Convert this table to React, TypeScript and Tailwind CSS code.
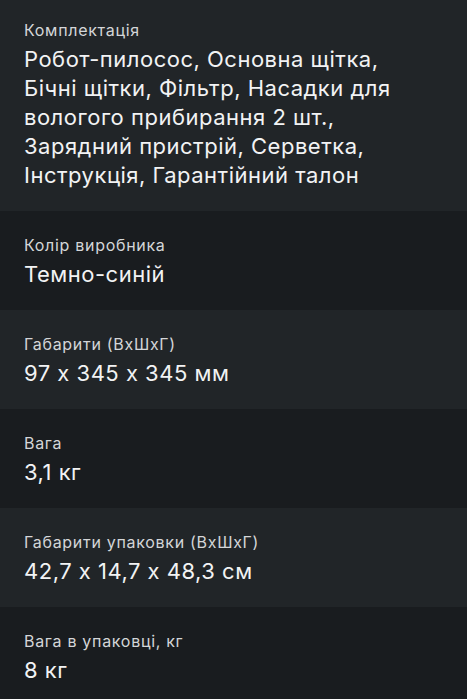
import React from 'react';

interface Spec {
  label: string;
  value: string;
}

const specs: Spec[] = [
  {
    label: 'Комплектація',
    value:
      'Робот-пилосос, Основна щітка, Бічні щітки, Фільтр, Насадки для вологого прибирання 2 шт., Зарядний пристрій, Серветка, Інструкція, Гарантійний талон',
  },
  { label: 'Колір виробника', value: 'Темно-синій' },
  { label: 'Габарити (ВхШхГ)', value: '97 x 345 x 345 мм' },
  { label: 'Вага', value: '3,1 кг' },
  { label: 'Габарити упаковки (ВхШхГ)', value: '42,7 x 14,7 x 48,3 см' },
  { label: 'Вага в упаковці, кг', value: '8 кг' },
];

export default function App() {
  return (
    <div
      className="w-[467px] h-[699px] overflow-hidden bg-[#191c1f]"
      style={{ fontFamily: 'Inter, "Noto Sans", sans-serif', fontFeatureSettings: '"calt" 0' }}
    >
      {specs.map((s, i) => (
        <div
          key={s.label}
          className={`pl-6 pr-[40px] pb-[21px] ${i === 0 ? 'pt-5' : 'pt-6'} ${
            i % 2 === 0 ? 'bg-[#212528]' : 'bg-[#191c1f]'
          }`}
        >
          <p className="text-[16px] leading-[20px] tracking-[0.7px] text-[#d4d6d8]">{s.label}</p>
          <p className="mt-[5px] text-[22px] leading-[29px] tracking-[0.5px] text-[#f2f3f4]">{s.value}</p>
        </div>
      ))}
    </div>
  );
}
